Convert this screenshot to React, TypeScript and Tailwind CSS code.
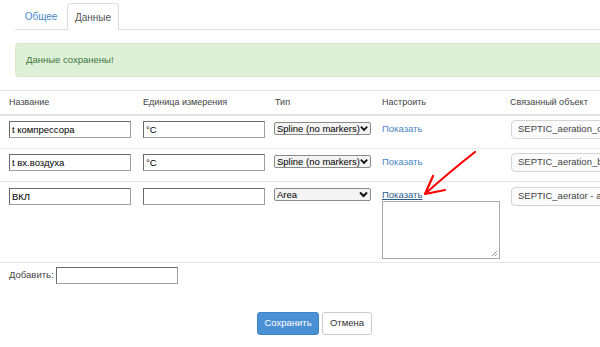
import React from "react";

const Input = ({ value, w = 122 }: { value?: string; w?: number }) => (
  <div
    className="h-[17px] whitespace-nowrap border border-[#a0a0a0] border-t-[#6b6b6b] border-l-[#6b6b6b] bg-white pl-[2px] text-[9.5px] leading-[15px] text-black"
    style={{ width: w }}
  >
    {value}
  </div>
);

const Select = ({ value }: { value: string }) => (
  <div className="mt-[1px] flex h-[13px] w-[97px] items-center justify-between whitespace-nowrap rounded-[2px] border border-[#8a8a8a] bg-[#f4f4f4] pl-[2px] pr-[2px] text-[9.5px] leading-[11px] text-black">
    <span>{value}</span>
    <svg width="9" height="7" viewBox="0 0 9 7">
      <path d="M1 1.5 L4.5 5 L8 1.5" stroke="#111" strokeWidth="2" fill="none" />
    </svg>
  </div>
);

const Linked = ({ value }: { value: string }) => (
  <div className="-mt-[1px] flex h-[19px] w-[160px] items-center whitespace-nowrap rounded-[4px] border border-[#d4d4d4] bg-[#fbfbfb] pl-[6px] text-[9.5px] text-[#444]">
    {value}
  </div>
);

const cols = "grid grid-cols-[143px_132px_107px_128px_210px]";

export default function App() {
  return (
    <div className="relative h-[347px] w-[600px] overflow-hidden bg-white font-['Liberation_Sans',Arial,sans-serif] text-[9.5px] text-[#333]">
      {/* Tabs */}
      <div className="ml-[15px] flex h-[30px] w-[700px] items-end border-b border-[#ddd] pt-[3px]">
        <div className="flex h-[26px] w-[52px] items-center justify-center text-[10px] text-[#4a86c5]">
          Общее
        </div>
        <div className="-mb-[1px] flex h-[27px] w-[52px] items-center justify-center rounded-t-[4px] border border-b-0 border-[#ddd] bg-white text-[10px] text-[#555]">
          Данные
        </div>
      </div>

      {/* Alert */}
      <div className="ml-[15px] mt-[13px] flex h-[34px] w-[700px] items-center rounded-[4px] border border-[#d6e9c6] bg-[#dff0d8] pl-[10px] text-[9.5px] text-[#3c763d]">
        Данные сохранены!
      </div>

      {/* Table */}
      <div className="mt-[13px] w-[720px] border-t border-[#e6e6e6]">
        <div className={`${cols} h-[25px] items-center border-b-2 border-[#e3e3e3] text-[9px] text-[#444]`}>
          <div className="pl-[9px]">Название</div>
          <div>Единица измерения</div>
          <div>Тип</div>
          <div>Настроить</div>
          <div>Связанный объект</div>
        </div>

        <div className={`${cols} h-[33px] items-start border-b border-[#e6e6e6] pt-[5px]`}>
          <div className="pl-[9px]"><Input value="t компрессора" /></div>
          <div><Input value="°C" /></div>
          <div className="-ml-[1px]"><Select value="Spline (no markers)" /></div>
          <div className="pt-[1px] text-[9.5px] text-[#4a86c5]">Показать</div>
          <div className="pl-[1px]"><Linked value="SEPTIC_aeration_compressor" /></div>
        </div>

        <div className={`${cols} h-[33px] items-start border-b border-[#e6e6e6] pt-[5px]`}>
          <div className="pl-[9px]"><Input value="t вх.воздуха" /></div>
          <div><Input value="°C" /></div>
          <div className="-ml-[1px]"><Select value="Spline (no markers)" /></div>
          <div className="pt-[1px] text-[9.5px] text-[#4a86c5]">Показать</div>
          <div className="pl-[1px]"><Linked value="SEPTIC_aeration_buffer" /></div>
        </div>

        <div className={`${cols} h-[81px] items-start border-b border-[#e6e6e6] pt-[6px]`}>
          <div className="pl-[9px]"><Input value="ВКЛ" /></div>
          <div><Input /></div>
          <div className="-ml-[1px] -mt-[1px]"><Select value="Area" /></div>
          <div className="flex flex-col items-start">
            <span className="text-[9.5px] leading-[13px] text-[#2a5d8f] underline">Показать</span>
            <div className="relative h-[58px] w-[118px] border border-[#a9a9a9] bg-white">
              <svg className="absolute bottom-[1px] right-[1px]" width="7" height="7" viewBox="0 0 7 7">
                <path d="M6 1 L1 6 M6 4 L4 6" stroke="#999" strokeWidth="1" />
              </svg>
            </div>
          </div>
          <div className="pl-[1px]"><Linked value="SEPTIC_aerator - аэратор" /></div>
        </div>

        <div className="flex items-center pl-[9px] pt-[4px] text-[9.5px] text-[#444]">
          <span>Добавить:</span>
          <div className="ml-[2px]"><Input /></div>
        </div>
      </div>

      {/* Buttons */}
      <div className="mt-[28px] flex gap-[3px] pl-[257px]">
        <div className="flex h-[23px] w-[62px] items-center justify-center rounded-[3px] border border-[#3f84c4] bg-[#4a90d2] text-[9.5px] text-white">
          Сохранить
        </div>
        <div className="flex h-[23px] w-[50px] items-center justify-center rounded-[3px] border border-[#ccc] bg-white text-[9.5px] text-[#333]">
          Отмена
        </div>
      </div>

      {/* Red arrow annotation */}
      <svg className="pointer-events-none absolute left-0 top-0" width="600" height="347" viewBox="0 0 600 347">
        <path d="M475 152 Q452 170 426 193" stroke="#f00" strokeWidth="2.2" fill="none" strokeLinecap="round" />
        <path d="M433 176 L425 194 L445 190" stroke="#f00" strokeWidth="2.2" fill="none" strokeLinecap="round" strokeLinejoin="round" />
      </svg>
    </div>
  );
}
